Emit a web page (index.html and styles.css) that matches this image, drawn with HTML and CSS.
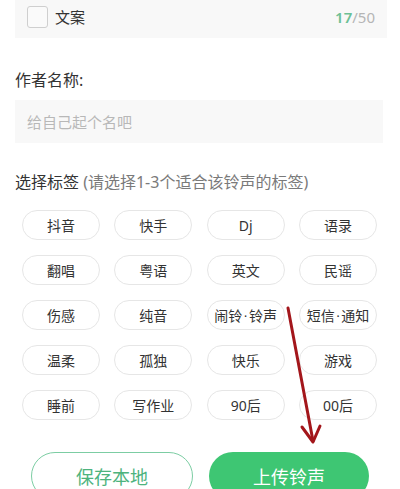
FILE: index.html
```html
<!DOCTYPE html>
<html lang="zh-CN">
<head>
<meta charset="utf-8">
<title>上传铃声</title>
<link rel="stylesheet" href="styles.css">
</head>
<body>
<div class="page">
  <div class="card">
    <span class="checkbox"></span>
    <span class="card-title">文案</span>
    <span class="counter"><b>17</b>/50</span>
  </div>

  <div class="label author-label">作者名称:</div>
  <div class="input">给自己起个名吧</div>

  <div class="label tag-label">选择标签 <span class="hint">(请选择1-3个适合该铃声的标签)</span></div>

  <div class="tags">
    <span class="tag">抖音</span><span class="tag">快手</span><span class="tag">Dj</span><span class="tag">语录</span>
    <span class="tag">翻唱</span><span class="tag">粤语</span><span class="tag">英文</span><span class="tag">民谣</span>
    <span class="tag">伤感</span><span class="tag">纯音</span><span class="tag">闹铃<span class="dot">·</span>铃声</span><span class="tag">短信<span class="dot">·</span>通知</span>
    <span class="tag">温柔</span><span class="tag">孤独</span><span class="tag">快乐</span><span class="tag">游戏</span>
    <span class="tag">睡前</span><span class="tag">写作业</span><span class="tag">90后</span><span class="tag">00后</span>
  </div>

  <div class="actions">
    <button class="btn btn-outline">保存本地</button>
    <button class="btn btn-fill">上传铃声</button>
  </div>

  <svg class="arrow" width="400" height="489" viewBox="0 0 400 489">
    <path d="M288 308 L313 441" stroke="#a3161b" stroke-width="3" fill="none" stroke-linecap="round"/>
    <path d="M302 427 L313 442 L320 426" stroke="#a3161b" stroke-width="3" fill="none" stroke-linecap="round" stroke-linejoin="round"/>
  </svg>
</div>
</body>
</html>
```

FILE: styles.css
```css
* { box-sizing: border-box; }
html, body { margin: 0; padding: 0; background: #fff; }
body {
  font-family: "Noto Sans", "Noto Sans CJK SC", "Liberation Sans", sans-serif;
  color: #333;
  width: 400px;
  height: 489px;
  overflow: hidden;
}
.page {
  position: relative;
  padding: 0 15px;
  height: 489px;
}
.card {
  display: flex;
  align-items: center;
  height: 38px;
  padding: 0 12px 4px 12px;
  background: #f8f8f8;
  margin-right: -2px;
}
.checkbox {
  width: 21px;
  height: 22px;
  border: 1.5px solid #cfcfcf;
  border-radius: 3px;
  background: #fafafa;
}
.card-title {
  margin-left: 7px;
  font-size: 15px;
  line-height: 20px;
  color: #333;
}
.counter {
  margin-left: auto;
  font-size: 15px;
  color: #b5b5b5;
}
.counter b {
  font-weight: 600;
  color: #6cc095;
}
.label {
  font-size: 16px;
  line-height: 22px;
  color: #333;
}
.author-label {
  margin-top: 31px;
}
.input {
  margin-top: 9px;
  height: 43px;
  background: #f8f8f8;
  padding-left: 12px;
  display: flex;
  align-items: center;
  font-size: 15px;
  color: #b8b8b8;
  margin-right: 2px;
}
.tag-label {
  margin-top: 28px;
}
.hint {
  color: #7a7a7a;
}
.tags {
  margin: 17px 8px 0 7px;
  display: grid;
  grid-template-columns: repeat(4, 78px);
  justify-content: space-between;
  row-gap: 15px;
}
.tag {
  height: 30px;
  border: 1px solid #e6e6e6;
  border-radius: 15px;
  display: flex;
  align-items: center;
  justify-content: center;
  font-size: 14px;
  color: #333;
  white-space: nowrap;
}
.dot {
  font-family: "Liberation Sans", sans-serif;
  margin: 0 1px;
}
.actions {
  margin: 32px 16px 0 16px;
  display: flex;
  gap: 16px;
}
.btn {
  flex: 1;
  height: 48px;
  border-radius: 24px;
  font-family: inherit;
  font-size: 18px;
  padding: 0;
}
.btn-outline {
  background: #fff;
  border: 1.5px solid #7ccda3;
  color: #4db37d;
}
.btn-fill {
  background: #3ec673;
  border: none;
  color: #fff;
}
.arrow {
  position: absolute;
  left: 0;
  top: 0;
  pointer-events: none;
}
```
